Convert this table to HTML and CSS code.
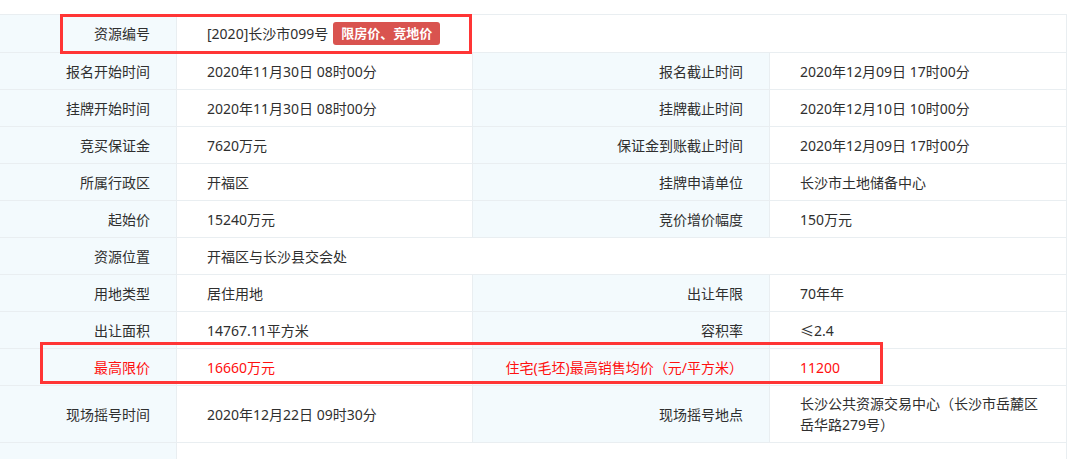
FILE: index.html
```html
<!DOCTYPE html>
<html lang="zh-CN">
<head>
<meta charset="utf-8">
<title>资源详情</title>
<link rel="stylesheet" href="styles.css">
</head>
<body>
<div class="page">
  <div class="grid">
    <div class="lbl">资源编号</div>
    <div class="val span3">[2020]长沙市099号<span class="tag">限房价、竞地价</span></div>

    <div class="lbl">报名开始时间</div>
    <div class="val">2020年11月30日 08时00分</div>
    <div class="lbl">报名截止时间</div>
    <div class="val">2020年12月09日 17时00分</div>

    <div class="lbl">挂牌开始时间</div>
    <div class="val">2020年11月30日 08时00分</div>
    <div class="lbl">挂牌截止时间</div>
    <div class="val">2020年12月10日 10时00分</div>

    <div class="lbl">竞买保证金</div>
    <div class="val">7620万元</div>
    <div class="lbl">保证金到账截止时间</div>
    <div class="val">2020年12月09日 17时00分</div>

    <div class="lbl">所属行政区</div>
    <div class="val">开福区</div>
    <div class="lbl">挂牌申请单位</div>
    <div class="val">长沙市土地储备中心</div>

    <div class="lbl">起始价</div>
    <div class="val">15240万元</div>
    <div class="lbl">竞价增价幅度</div>
    <div class="val">150万元</div>

    <div class="lbl">资源位置</div>
    <div class="val span3">开福区与长沙县交会处</div>

    <div class="lbl">用地类型</div>
    <div class="val">居住用地</div>
    <div class="lbl">出让年限</div>
    <div class="val">70年年</div>

    <div class="lbl">出让面积</div>
    <div class="val">14767.11平方米</div>
    <div class="lbl">容积率</div>
    <div class="val">≤2.4</div>

    <div class="lbl hot">最高限价</div>
    <div class="val hot">16660万元</div>
    <div class="lbl hot">住宅(毛坯)最高销售均价（元/平方米）</div>
    <div class="val hot">11200</div>

    <div class="lbl">现场摇号时间</div>
    <div class="val">2020年12月22日 09时30分</div>
    <div class="lbl">现场摇号地点</div>
    <div class="val">长沙公共资源交易中心（长沙市岳麓区岳华路279号）</div>

    <div class="lbl"></div>
    <div class="val span3 empty"></div>
  </div>

  <div class="mark mark-one"></div>
  <div class="mark mark-two"></div>
</div>
</body>
</html>
```

FILE: styles.css
```css
html, body {
  margin: 0;
  padding: 0;
  background: #ffffff;
}

body {
  font-family: "Noto Sans", "Noto Sans CJK SC", sans-serif;
  font-size: 14px;
  color: #2f2f2f;
  overflow: hidden;
}

.page {
  position: relative;
  padding-top: 14px;
}

.grid {
  display: grid;
  grid-template-columns: 176px 295px 296px 296px;
  gap: 1px;
  padding: 1px;
  margin-left: -1px;
  width: max-content;
  background: #e9eef1;
}

.lbl,
.val {
  display: flex;
  align-items: center;
  min-height: 36px;
  box-sizing: border-box;
  line-height: 21px;
  padding-top: 7px;
  padding-bottom: 7px;
}

.lbl {
  background: #f3fafd;
  justify-content: flex-end;
  text-align: right;
  padding-right: 26px;
  padding-left: 10px;
}

.val {
  background: #ffffff;
  padding-left: 30px;
  padding-right: 20px;
}

.span3 {
  grid-column: span 3;
}

.empty {
  min-height: 40px;
}

.hot {
  color: #ff1010;
}

.tag {
  display: inline-block;
  margin-left: 5px;
  padding: 0 8px;
  height: 23px;
  line-height: 23px;
  border-radius: 3px;
  background: #d9534f;
  color: #ffffff;
  font-size: 13px;
  font-weight: 700;
}

.mark {
  position: absolute;
  box-sizing: border-box;
  border: 3px solid #ff3535;
}

.mark-one {
  left: 60px;
  top: 14px;
  width: 412px;
  height: 40px;
}

.mark-two {
  left: 40px;
  top: 342px;
  width: 843px;
  height: 42px;
}
```
